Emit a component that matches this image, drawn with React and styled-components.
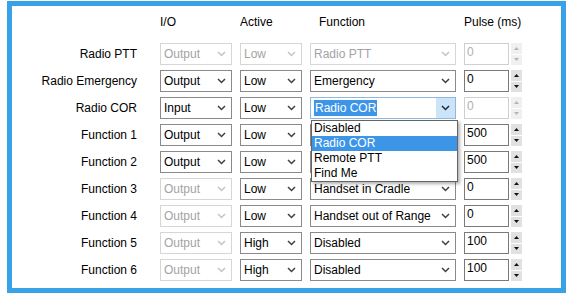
import React from 'react';
import styled, { createGlobalStyle } from 'styled-components';

const GlobalStyle = createGlobalStyle`
  body {
    margin: 0;
    background: #fff;
    font-family: "Liberation Sans", Arial, sans-serif;
    font-size: 12px;
    color: #000;
  }
`;

const Frame = styled.div`
  box-sizing: border-box;
  margin: 1px 0 0 7px;
  width: 559px;
  height: 292px;
  border: 5px solid #37a3e6;
  background: #fff;
`;

const Grid = styled.div`
  display: grid;
  grid-template-columns: 140px 72px 62px 146px 58px;
  grid-template-rows: 32px repeat(9, 22px);
  column-gap: 8px;
  row-gap: 5px;
`;

const Header = styled.div`
  align-self: center;
  padding-left: ${({ $indent }) => $indent || 0}px;
  margin-top: -1px;
`;

const Label = styled.div`
  text-align: right;
  padding-right: 15px;
  line-height: 22px;
`;

const Combo = styled.div`
  position: relative;
  box-sizing: border-box;
  display: flex;
  align-items: center;
  height: 22px;
  padding-left: 3px;
  border: 1px solid ${({ $disabled, $open }) => ($open ? '#8fb8e0' : $disabled ? '#d6d6d6' : '#8a8a8a')};
  color: ${({ $disabled }) => ($disabled ? '#a3a3a3' : '#000')};
  background: #fff;
  white-space: nowrap;
  z-index: ${({ $open }) => ($open ? 2 : 0)};
`;

const Selected = styled.span`
  background: #3d95e8;
  color: #fff;
  padding: 1px 1px;
`;

const Arrow = styled.div`
  margin-left: auto;
  width: 19px;
  align-self: stretch;
  display: flex;
  align-items: center;
  justify-content: center;
  background: ${({ $open }) => ($open ? '#cce4f7' : 'transparent')};
  color: ${({ $disabled, $open }) => ($open ? '#1b2b3c' : $disabled ? '#c4c4c4' : '#404040')};
`;

const DropList = styled.div`
  position: absolute;
  left: 0;
  top: 22px;
  width: 147px;
  box-sizing: border-box;
  border: 1px solid #646464;
  background: #fff;
  box-shadow: 2px 2px 3px rgba(0, 0, 0, 0.3);
`;

const Item = styled.div`
  height: 15px;
  line-height: 15px;
  padding-left: 2px;
  background: ${({ $active }) => ($active ? '#3d95e8' : '#fff')};
  color: ${({ $active }) => ($active ? '#fff' : '#000')};
`;

const PulseCell = styled.div`
  display: flex;
  gap: 2px;
`;

const PulseInput = styled.div`
  box-sizing: border-box;
  width: 45px;
  height: 22px;
  padding: 1px 2px;
  line-height: 14px;
  border: 1px solid ${({ $disabled }) => ($disabled ? '#cfcfcf' : '#7a7a7a')};
  color: ${({ $disabled }) => ($disabled ? '#b0b0b0' : '#000')};
`;

const Spinner = styled.div`
  width: 11px;
  height: 22px;
  display: flex;
  flex-direction: column;
  gap: 1px;
`;

const SpinButton = styled.div`
  flex: 1;
  display: flex;
  align-items: center;
  justify-content: center;
  background: ${({ $disabled }) => ($disabled ? '#f0f0f0' : '#e1e1e1')};
  color: ${({ $disabled }) => ($disabled ? '#b5b5b5' : '#111')};
`;

const Chevron = () => (
  <svg width="9" height="6" viewBox="0 0 9 6">
    <path d="M1 1 L4.5 4.5 L8 1" fill="none" stroke="currentColor" strokeWidth="1.5" />
  </svg>
);

const Tri = ({ up }) => (
  <svg width="5" height="3" viewBox="0 0 5 3">
    <path d={up ? 'M0 3 L2.5 0 L5 3 Z' : 'M0 0 L2.5 3 L5 0 Z'} fill="currentColor" />
  </svg>
);

const ComboBox = ({ value, disabled, open, options = [] }) => (
  <Combo $disabled={disabled} $open={open}>
    {open ? <Selected>{value}</Selected> : value}
    <Arrow $disabled={disabled} $open={open}>
      <Chevron />
    </Arrow>
    {open && (
      <DropList>
        {options.map((o) => (
          <Item key={o} $active={o === value}>
            {o}
          </Item>
        ))}
      </DropList>
    )}
  </Combo>
);

const Pulse = ({ value, disabled }) => (
  <PulseCell>
    <PulseInput $disabled={disabled}>{value}</PulseInput>
    <Spinner>
      <SpinButton $disabled={disabled}>
        <Tri up />
      </SpinButton>
      <SpinButton $disabled={disabled}>
        <Tri />
      </SpinButton>
    </Spinner>
  </PulseCell>
);

// function combos of rows 4 and 5 sit under the open list, so their text is left out
const rows = [
  { label: 'Radio PTT', io: 'Output', ioOff: true, active: 'Low', actOff: true, fn: 'Radio PTT', fnOff: true, pulse: '0', pulseOff: true },
  { label: 'Radio Emergency', io: 'Output', active: 'Low', fn: 'Emergency', pulse: '0' },
  { label: 'Radio COR', io: 'Input', active: 'Low', fn: 'Radio COR', open: true, pulse: '0', pulseOff: true },
  { label: 'Function 1', io: 'Output', active: 'Low', fn: '', pulse: '500' },
  { label: 'Function 2', io: 'Output', active: 'Low', fn: '', pulse: '500' },
  { label: 'Function 3', io: 'Output', ioOff: true, active: 'Low', fn: 'Handset in Cradle', pulse: '0' },
  { label: 'Function 4', io: 'Output', ioOff: true, active: 'Low', fn: 'Handset out of Range', pulse: '0' },
  { label: 'Function 5', io: 'Output', ioOff: true, active: 'High', fn: 'Disabled', pulse: '100' },
  { label: 'Function 6', io: 'Output', ioOff: true, active: 'High', fn: 'Disabled', pulse: '100' },
];

const corOptions = ['Disabled', 'Radio COR', 'Remote PTT', 'Find Me'];

const App = () => (
  <>
    <GlobalStyle />
    <Frame>
      <Grid>
        <div />
        <Header>I/O</Header>
        <Header>Active</Header>
        <Header $indent={9}>Function</Header>
        <Header>Pulse (ms)</Header>
        {rows.map((r) => (
          <React.Fragment key={r.label}>
            <Label>{r.label}</Label>
            <ComboBox value={r.io} disabled={r.ioOff} />
            <ComboBox value={r.active} disabled={r.actOff} />
            <ComboBox value={r.fn} disabled={r.fnOff} open={r.open} options={corOptions} />
            <Pulse value={r.pulse} disabled={r.pulseOff} />
          </React.Fragment>
        ))}
      </Grid>
    </Frame>
  </>
);

export default App;
